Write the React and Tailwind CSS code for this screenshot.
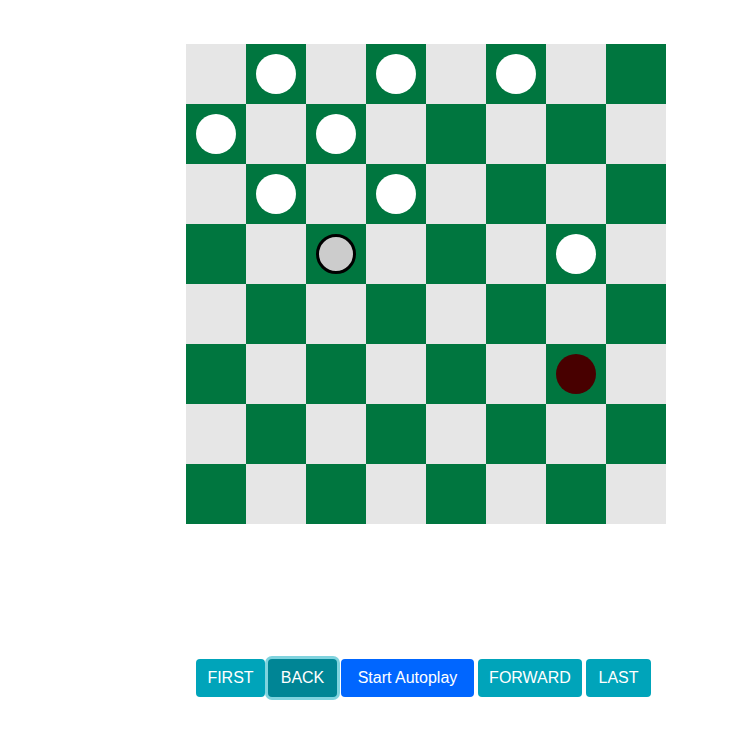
import React from "react";

// piece layout: row -> col -> type
const pieces = {
  "0-1": "white",
  "0-3": "white",
  "0-5": "white",
  "1-0": "white",
  "1-2": "white",
  "2-1": "white",
  "2-3": "white",
  "3-2": "selected",
  "3-6": "white",
  "5-6": "red",
};

function Piece({ type }) {
  if (type === "selected") {
    return <div className="w-10 h-10 rounded-full bg-[#cccccc] border-[3px] border-black" />;
  }
  if (type === "red") {
    return <div className="w-10 h-10 rounded-full bg-[#480000]" />;
  }
  return <div className="w-10 h-10 rounded-full bg-white" />;
}

function Board() {
  const cells = [];
  for (let r = 0; r < 8; r++) {
    for (let c = 0; c < 8; c++) {
      const dark = (r + c) % 2 === 1;
      const p = pieces[`${r}-${c}`];
      cells.push(
        <div
          key={`${r}-${c}`}
          className={
            "w-[60px] h-[60px] flex items-center justify-center " +
            (dark ? "bg-[#00763f]" : "bg-[#e6e6e6]")
          }
        >
          {p && <Piece type={p} />}
        </div>
      );
    }
  }
  return <div className="grid grid-cols-[repeat(8,60px)] w-[480px]">{cells}</div>;
}

export default function App() {
  return (
    <div
      className="w-[750px] h-[732px] bg-white pt-[44px] pl-[186px]"
      style={{ fontFamily: '"Liberation Sans", Arial, sans-serif' }}
    >
      <Board />
      <div className="mt-[135px] ml-[10px] flex text-white text-[16px]">
        <button className="w-[69px] h-[38px] rounded-[4px] bg-[#00a4ba]">FIRST</button>
        <button className="ml-[3px] w-[69px] h-[38px] rounded-[4px] bg-[#008595] shadow-[0_0_0_3px_#7fd3de]">BACK</button>
        <button className="ml-[4px] w-[133px] h-[38px] rounded-[4px] bg-[#0066ff]">Start Autoplay</button>
        <button className="ml-[4px] w-[104px] h-[38px] rounded-[4px] bg-[#00a4ba]">FORWARD</button>
        <button className="ml-[4px] w-[65px] h-[38px] rounded-[4px] bg-[#00a4ba]">LAST</button>
      </div>
    </div>
  );
}
